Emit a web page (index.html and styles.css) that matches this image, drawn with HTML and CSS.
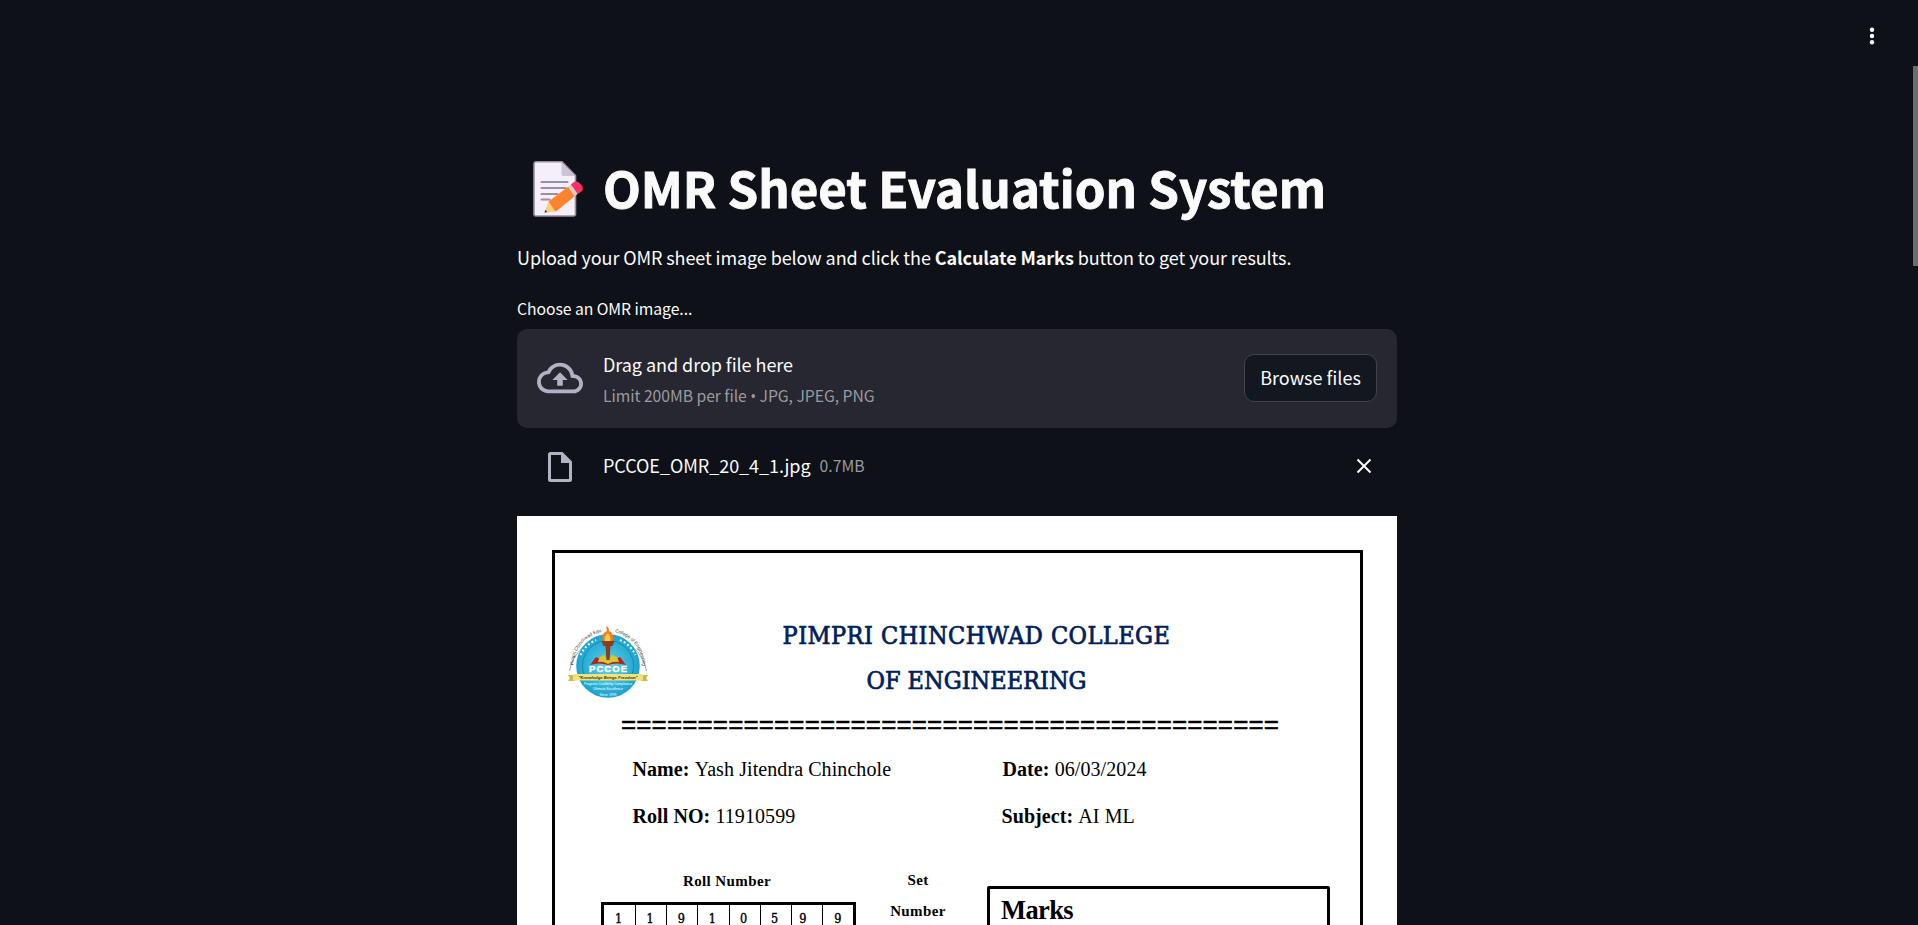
FILE: index.html
```html
<!DOCTYPE html>
<html lang="en">
<head>
<meta charset="utf-8">
<title>OMR Sheet Evaluation System</title>
<link rel="stylesheet" href="styles.css">
</head>
<body>
<header class="toolbar">
  <svg class="menu-icon" viewBox="0 0 20 24" width="20" height="24"><circle cx="10" cy="5.800" r="2.200"/><circle cx="10" cy="12" r="2.200"/><circle cx="10" cy="18.200" r="2.200"/></svg>
</header>
<div class="scroll-thumb"></div>
<main class="content">
  <h1 class="title">
    <svg class="memo" viewBox="0 0 54 56" width="54" height="56">
      <path d="M3 .8h26L42.500 14.500V53a2 2 0 0 1-2 2H3a2 2 0 0 1-2-2V2.800a2 2 0 0 1 2-2z" fill="#f4eff9" stroke="#998ea4" stroke-width="1.600"/>
      <path d="M28.500 1.500L42 15H30.500a2 2 0 0 1-2-2z" fill="#cdc4d6"/>
      <path d="M8.500 21h26M8.500 27h24M8.500 33h16M8.500 38.500h8" stroke="#998ea4" stroke-width="2" stroke-linecap="round"/>
      <path d="M15.500 40.500L11.500 51.500l11-.8z" fill="#ffce7c"/>
      <path d="M12.500 48.700L11.400 51.500l3-.2z" fill="#483b45"/>
      <path d="M15.500 40.500L35.500 25.500l6.500 9.500L22.500 50.800z" fill="#ff822d"/>
      <path d="M35 25.900l3-2.300 6.800 9.200-3 2.400z" fill="#d3d3d3"/>
      <path d="M37.800 23.600l3.200-2.500c4.500-3 12 6.400 7.500 9.400l-3.700 2.600z" fill="#ff2f5f"/>
    </svg>
    <span class="title-text">OMR Sheet Evaluation System</span>
  </h1>
  <p class="intro">Upload your OMR sheet image below and click the <b>Calculate Marks</b> button to get your results.</p>
  <div class="label">Choose an OMR image...</div>
  <section class="dropzone">
    <svg class="cloud" viewBox="0 0 24 24" width="46" height="46"><path d="M19.350 10.040A7.490 7.490 0 0 0 12 4C9.110 4 6.600 5.640 5.350 8.040A5.994 5.994 0 0 0 0 14c0 3.310 2.690 6 6 6h13c2.760 0 5-2.240 5-5 0-2.640-2.050-4.780-4.650-4.960zM19 18H6c-2.210 0-4-1.790-4-4 0-2.050 1.530-3.760 3.560-3.970l1.070-.11.5-.95A5.469 5.469 0 0 1 12 6c2.620 0 4.880 1.860 5.390 4.430l.3 1.500 1.530.11A2.980 2.980 0 0 1 22 15c0 1.650-1.350 3-3 3zM8 13h2.550v3h2.900v-3H16l-4-4z"/></svg>
    <div class="drop-text">
      <span class="drop-main">Drag and drop file here</span>
      <span class="small drop-limit">Limit 200MB per file <span class="bullet">•</span> JPG, JPEG, PNG</span>
    </div>
    <button class="browse">Browse files</button>
  </section>
  <div class="file-row">
    <svg class="file-icon" viewBox="0 0 24 30" width="24" height="30"><path fill-rule="evenodd" d="M2.500 0H14.500L24 9.500V27.500A2.500 2.500 0 0 1 21.500 30H2.500A2.500 2.500 0 0 1 0 27.500V2.500A2.500 2.500 0 0 1 2.500 0zM3 3V27H21V11H13V3z"/></svg>
    <span class="file-name">PCCOE_OMR_20_4_1.jpg</span>
    <span class="small file-size">0.7MB</span>
    <svg class="close" viewBox="0 0 16 16" width="16" height="16"><path d="M1.500 1.500L14.500 14.500M14.500 1.500L1.500 14.500"/></svg>
  </div>
  <article class="sheet">
    <div class="page">
      <div class="college">
        <svg class="logo" viewBox="0 0 82 76" width="82" height="76">
          <defs>
            <radialGradient id="sky"><stop offset="0" stop-color="#6cd0ea"/><stop offset=".6" stop-color="#35b5da"/><stop offset="1" stop-color="#1ba3cc"/></radialGradient>
            <path id="rim-left" d="M6.500 40A34.500 34.500 0 0 1 37 6.700"/>
            <path id="rim-right" d="M48 7.200A34.500 34.500 0 0 1 75.500 40"/>
          </defs>
          <path d="M2.500 46A39 39 0 0 1 79.500 46" fill="none" stroke="#777e83" stroke-width=".7"/>
          <circle cx="41" cy="41" r="31.800" fill="url(#sky)"/>
          <path d="M18 52A25.500 25.500 0 1 1 64 52" fill="none" stroke="#176f91" stroke-width=".6"/>
          <path d="M13.500 30A30 30 0 0 1 29 15M53 15A30 30 0 0 1 68.500 30" fill="none" stroke="#e9f8fd" stroke-width="2" stroke-dasharray="2 2.200"/>
          <text class="rim-text"><textPath href="#rim-left">Pimpri Chinchwad Edu.</textPath></text>
          <text class="rim-text"><textPath href="#rim-right">College of Engineering</textPath></text>
          <path d="M23 40l6-8 12 6 12-6 6 8q-9-3-18 0-9-3-18 0z" fill="#b3261e"/>
          <path d="M31 37q1-6 6-7l4 6 4-6q6 1 7 7-6-1-11 2-5-3-10-2z" fill="#d8c72f"/>
          <path d="M34.500 16h13l-2 5h-2l-1 14h-3l-1-14h-2z" fill="#8d3c1d"/>
          <path d="M36 16c-1.500-5 0-8 4-10 0-2-1-3-.5-5 2 1 2.500 3 2.500 5 4 2 5 6 3.500 10z" fill="#f47b20"/>
          <path d="M38 16c-1-4 1-6 3-8 2 3 3 5 2 8z" fill="#ffd23c"/>
          <text class="acronym" x="22" y="47.400" textLength="38">PCCOE</text>
          <path d="M1 50h7v6H1l2-3zM81 50h-7v6h7l-2-3z" fill="#c9b84a"/>
          <path d="M6 49h70v6.500H6z" fill="#f0e37e"/>
          <text class="motto" x="41" y="53.800">"Knowledge Brings Freedom"</text>
          <text class="tag" x="41" y="60">Progress Credibility Compliance</text>
          <text class="tag" x="41" y="64.700">Ultimate Excellence</text>
          <text class="tag" x="41" y="71">Since 1999</text>
        </svg>
        <div class="names">
          <div class="college-name first">PIMPRI CHINCHWAD COLLEGE</div>
          <div class="college-name">OF ENGINEERING</div>
        </div>
      </div>
      <div class="rule">===========================================</div>
      <dl class="info">
        <div><dt>Name:</dt> <dd>Yash Jitendra Chinchole</dd></div>
        <div class="date"><dt>Date:</dt> <dd>06/03/2024</dd></div>
        <div><dt>Roll NO:</dt> <dd>11910599</dd></div>
        <div><dt>Subject:</dt> <dd>AI ML</dd></div>
      </dl>
      <div class="bottom">
        <div class="roll">
          <div class="roll-title">Roll Number</div>
          <div class="roll-cells"><span>1</span><span>1</span><span>9</span><span>1</span><span>0</span><span>5</span><span class="shifted">9</span><span>9</span></div>
        </div>
        <div class="set">Set<br>Number</div>
        <div class="marks">Marks</div>
      </div>
    </div>
  </article>
</main>
</body>
</html>
```
FILE: styles.css
```css
* { box-sizing: border-box; }
body { margin: 0; height: 925px; overflow: hidden; background: #0e1117; color: #fafafa; font-family: "Noto Sans CJK SC", sans-serif; font-size: 18px; }
.toolbar { height: 66px; display: flex; justify-content: flex-end; padding: 24px 36px 0 0; }
.menu-icon { fill: #fafafa; }
.scroll-thumb { position: absolute; right: 0; top: 66px; width: 5px; height: 200px; background: #6c6d70; border-radius: 0 0 1px 1px; }
.content { width: 880px; margin-left: 517px; }
.title { margin: 95px 0 0; height: 56px; padding-left: 16px; display: flex; gap: 16px; font-size: 49.200px; line-height: 51px; white-space: nowrap; }
.title-text { -webkit-text-stroke: .9px #fafafa; }
.intro { margin: 24px 0 0; height: 32px; line-height: 32px; letter-spacing: -.095px; white-space: nowrap; }
.label { margin-top: 24px; font-size: 15.750px; line-height: 24px; letter-spacing: -.06px; }
.dropzone { height: 99px; margin-top: 8px; padding: 0 20px 1px; border-radius: 10px; background: #262730; display: flex; align-items: center; gap: 20px; }
.cloud { fill: #b1b3c5; }
.drop-text { flex: 1; display: flex; flex-direction: column; line-height: 31px; padding-top: 4px; }
.drop-main { letter-spacing: -.05px; }
.small { font-size: 15.750px; color: #9a9a9e; }
.drop-limit { letter-spacing: -.06px; }
.bullet { font-family: "Open Sans", sans-serif; }
.browse { width: 133px; height: 48px; background: #131720; border: 1px solid #41434a; border-radius: 10px; color: #fafafa; font: inherit; line-height: 44px; padding: 0 0 2px; white-space: nowrap; }
.file-row { height: 76px; margin-bottom: 12px; display: flex; align-items: center; padding-left: 31px; padding-top: 1px; }
.file-icon { fill: #b1b3c5; margin-right: 31px; }
.file-name { letter-spacing: -.05px; padding-bottom: 4px; }
.file-size { margin-left: 9px; padding-bottom: 3px; }
.close { stroke: #fafafa; stroke-width: 2; margin-left: auto; margin-right: 25px; margin-bottom: 1px; }
.sheet { height: 409px; background: #fff; color: #000; padding: 34px 34px 0 34.500px; font-family: "Liberation Serif", serif; }
.page { border: 3px solid #000; border-bottom: 0; height: 375px; padding-top: 60px; }
.college { display: flex; padding-left: 12.500px; height: 90px; }
.logo { margin-top: 12px; }
.rim-text { font: 4.600px "Liberation Sans", sans-serif; fill: #333; }
.acronym { font: bold 9.500px "Liberation Sans", sans-serif; fill: #fff; stroke: #fff; stroke-width: .4px; }
.motto { font: bold italic 4.200px "Liberation Sans", sans-serif; fill: #3a3510; text-anchor: middle; }
.tag { font: 3.400px "Liberation Sans", sans-serif; fill: #fff; text-anchor: middle; }
.names { width: 655px; text-align: center; }
.college-name { font: 25px/45px "DejaVu Serif Condensed", "DejaVu Serif", serif; color: #00205b; -webkit-text-stroke: .7px #00205b; }
.first { letter-spacing: .45px; }
.rule { padding-left: 66.500px; font: 26px/43px "Liberation Sans", sans-serif; letter-spacing: .12px; -webkit-text-stroke: .5px #000; }
.info { margin: 0; padding-left: 78px; font-size: 20px; line-height: 46.500px; letter-spacing: .08px; display: grid; grid-template-columns: 369px 1fr; }
.info dt, .info dd { display: inline; margin: 0; }
.info dt { font-weight: bold; }
.date { padding-left: 1px; }
.bottom { display: flex; align-items: flex-start; margin-top: 26px; padding-left: 46.500px; font-weight: bold; font-size: 15px; }
.roll { width: 255px; padding-top: 8px; }
.roll-title { line-height: 16px; height: 29px; text-align: center; letter-spacing: .4px; padding-right: 3px; }
.roll-cells { height: 40px; border: 3px solid #000; display: grid; grid-template-columns: repeat(8, 1fr); font: 12.500px/27px "DejaVu Serif Condensed", "DejaVu Serif", serif; -webkit-text-stroke: .4px #000; text-align: center; }
.roll-cells span { padding-right: 2px; }
.roll-cells span + span { border-left: 1px solid #000; }
.roll-cells .shifted { padding-right: 8px; }
.roll-cells span:last-child { padding-right: 0; }
.set { width: 131px; padding-right: 7px; text-align: center; line-height: 31px; letter-spacing: .4px; }
.marks { width: 343px; height: 60px; margin-top: 21px; padding-left: 11px; border: 3px solid #000; border-radius: 2px; font-size: 26.500px; line-height: 42px; letter-spacing: -.6px; }
```
